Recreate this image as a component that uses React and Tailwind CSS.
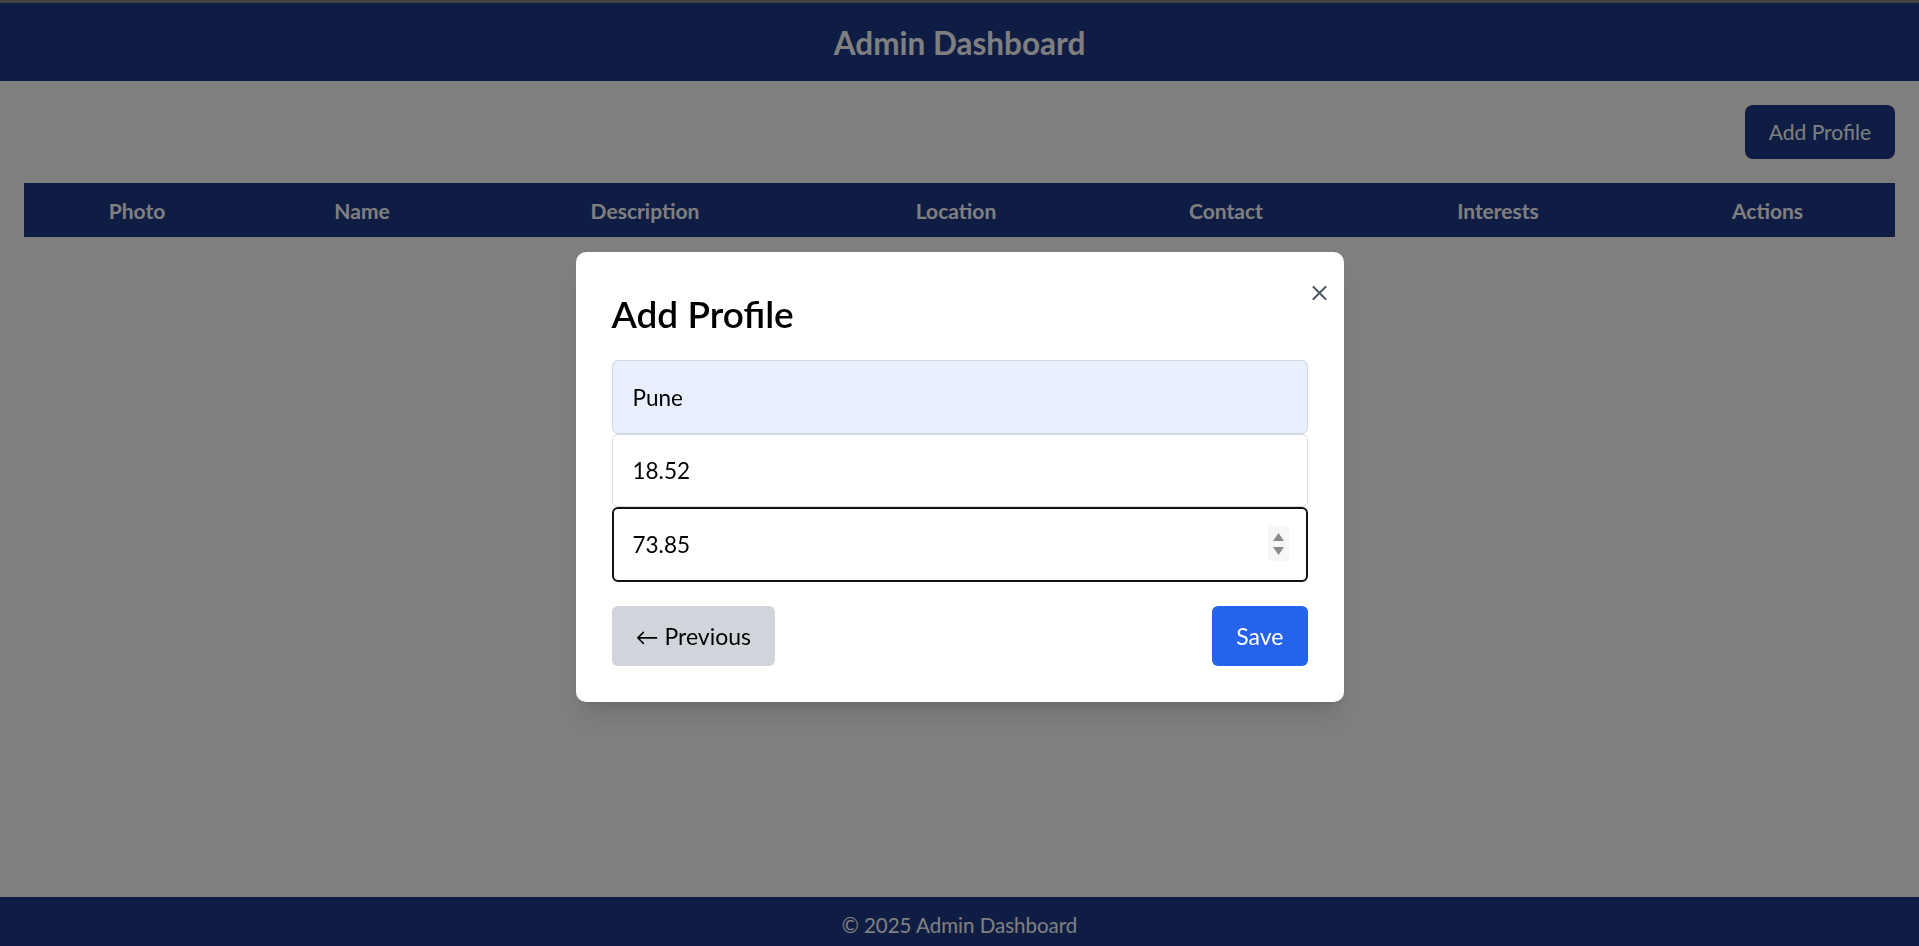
import React from "react";

const cols = ["Photo", "Name", "Description", "Location", "Contact", "Interests", "Actions"];

export default function App() {
  return (
    <div className="min-h-screen flex flex-col bg-white" style={{ fontFamily: "Lato, 'Noto Sans', sans-serif" }}>
      <div className="h-[3px] bg-[#888888]" />
      <header className="h-[78px] bg-[#1e3a8a] flex items-center justify-center pt-[3px]">
        <h1 className="text-[31.5px] font-bold text-white leading-none">Admin Dashboard</h1>
      </header>
      <main className="flex-1 px-6 pt-6">
        <div className="flex justify-end mb-6">
          <button className="h-[54px] px-6 rounded-lg bg-[#1e3a8a] text-white text-[21px]">Add Profile</button>
        </div>
        <div className="grid grid-cols-[226px_224px_342px_280px_260px_284px_1fr] h-[54px] bg-[#1e3a8a] text-white font-bold text-[21px]">
          {cols.map((c) => (
            <div key={c} className="flex items-center justify-center pt-[1px]">{c}</div>
          ))}
        </div>
      </main>
      <footer className="h-[49px] bg-[#1e3a8a] text-white text-[20.5px] flex items-center justify-center pt-2">
        © 2025 Admin Dashboard
      </footer>

      <div className="fixed inset-0 bg-black/50 flex items-center justify-center pt-2">
        <div className="relative w-[768px] bg-white rounded-[10px] shadow-xl p-9">
          <svg className="absolute top-[34px] right-[17px]" width="15" height="14" viewBox="0 0 15 14" fill="none">
            <path d="M1.5 1 L13.5 13 M13.5 1 L1.5 13" stroke="#4b5563" strokeWidth="2" strokeLinecap="round" />
          </svg>
          <h2 className="text-[37px] font-semibold leading-[48px] mt-[2px] mb-[22px] text-black">Add Profile</h2>
          <div className="flex flex-col">
            <input
              readOnly
              value="Pune"
              className="h-[74px] w-full px-5 text-[22.5px] rounded-md border border-[#d1d5db] bg-[#e8f0fe] text-black outline-none"
            />
            <input
              readOnly
              value="18.52"
              className="h-[73px] w-full px-5 text-[22.5px] rounded-md border border-[#d8dbe0] bg-white text-black outline-none"
            />
            <div className="relative">
              <input
                readOnly
                value="73.85"
                className="h-[75px] w-full pl-[19px] pr-5 text-[22.5px] rounded-md border-2 border-[#111111] bg-white text-black outline-none"
              />
              <div className="absolute right-[19px] top-[19px] w-[21px] h-[35px] bg-[#f7f7f7] flex flex-col items-center justify-center gap-[6px]">
                <svg width="11" height="8" viewBox="0 0 11 8"><path d="M5.5 0 L11 8 L0 8 Z" fill="#8a8a8a" /></svg>
                <svg width="11" height="8" viewBox="0 0 11 8"><path d="M0 0 L11 0 L5.5 8 Z" fill="#8a8a8a" /></svg>
              </div>
            </div>
          </div>
          <div className="flex justify-between mt-6">
            <button className="h-[60px] px-6 rounded-md bg-[#d1d5db] text-black text-[23px]">← Previous</button>
            <button className="h-[60px] px-6 rounded-md bg-[#2563eb] text-white text-[23px]">Save</button>
          </div>
        </div>
      </div>
    </div>
  );
}
